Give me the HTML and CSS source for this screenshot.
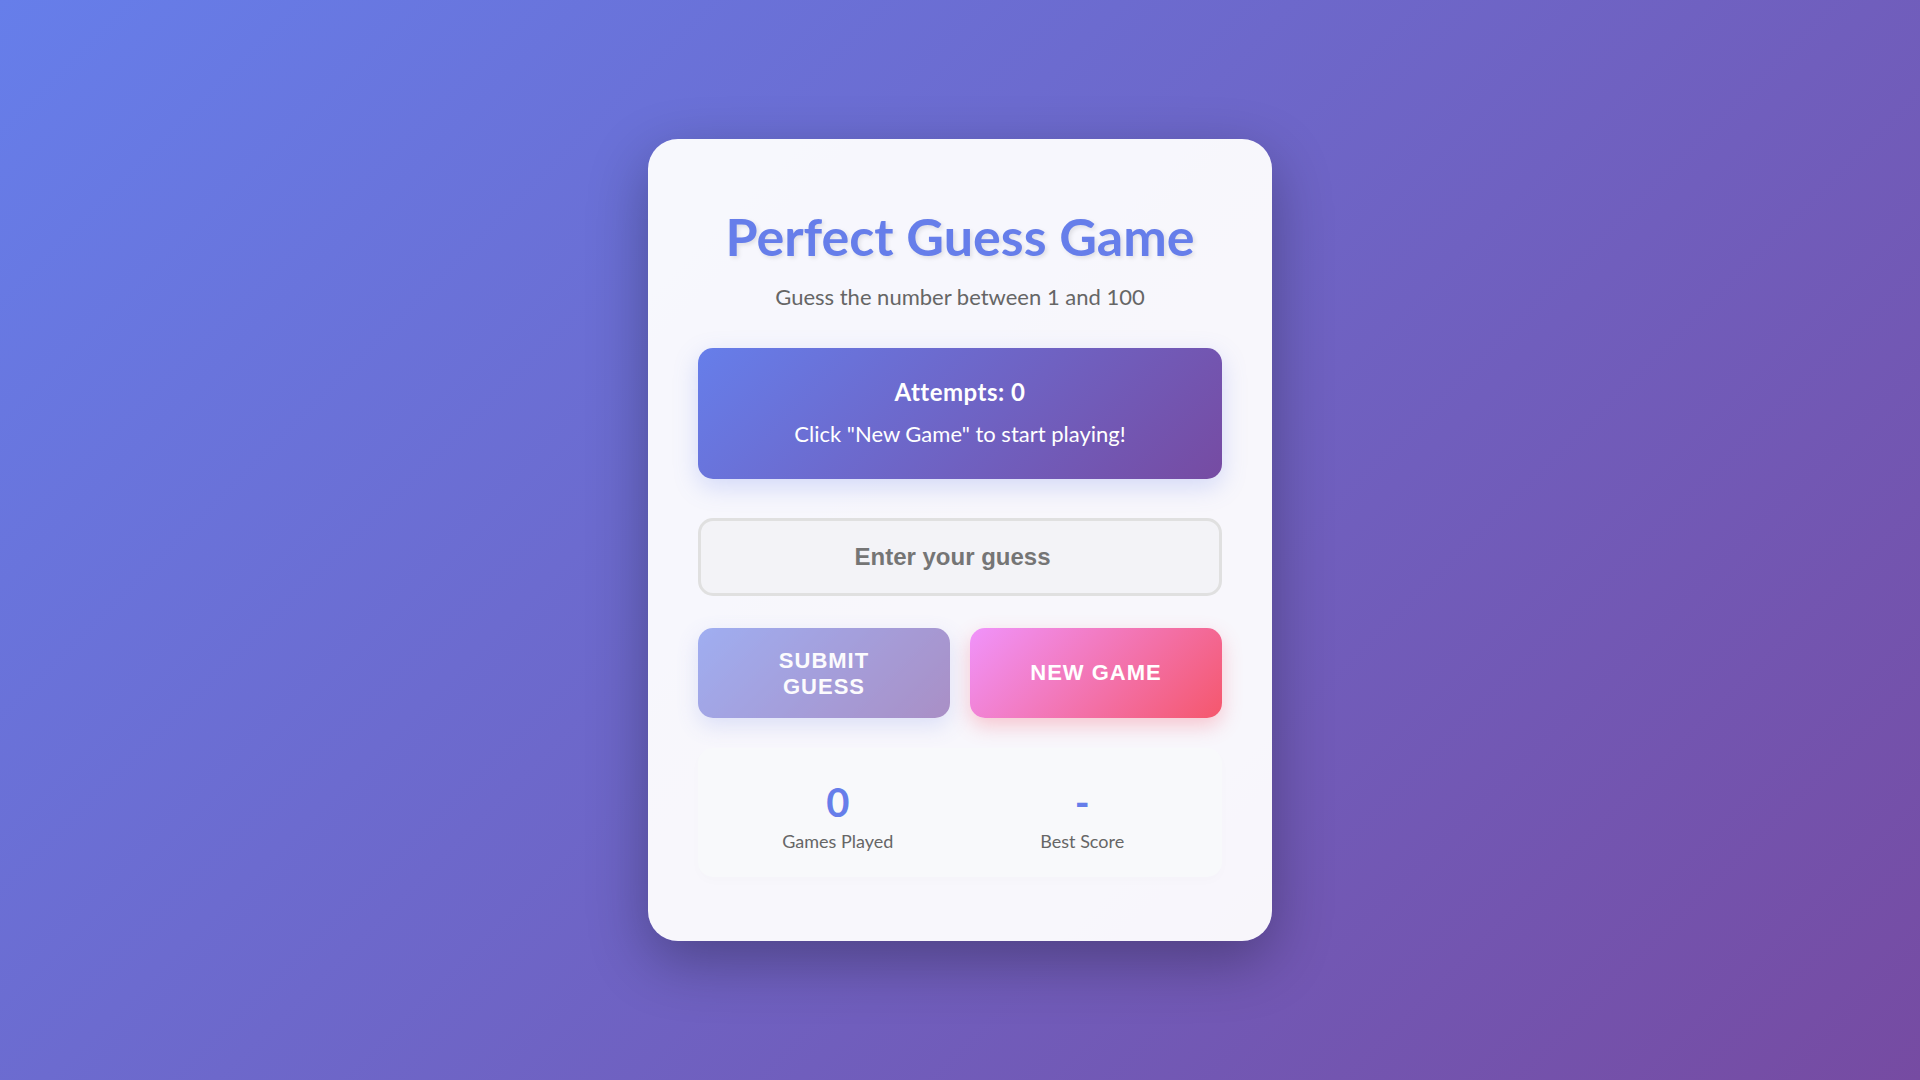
FILE: index.html
```html
<!DOCTYPE html>
<html lang="en">
<head>
<meta charset="UTF-8">
<title>Perfect Guess Game</title>
<link rel="stylesheet" href="styles.css">
</head>
<body>
<main class="card">
  <h1 class="title">Perfect Guess Game</h1>
  <p class="subtitle">Guess the number between 1 and 100</p>
  <section class="status">
    <div class="attempts">Attempts: 0</div>
    <div class="message">Click "New Game" to start playing!</div>
  </section>
  <input class="guess-input" type="number" placeholder="Enter your guess" disabled>
  <div class="buttons">
    <button class="btn btn-submit" disabled>Submit Guess</button>
    <button class="btn btn-new">New Game</button>
  </div>
  <section class="stats">
    <div class="stat">
      <div class="stat-number">0</div>
      <div class="stat-label">Games Played</div>
    </div>
    <div class="stat">
      <div class="stat-number">-</div>
      <div class="stat-label">Best Score</div>
    </div>
  </section>
</main>
</body>
</html>
```

FILE: styles.css
```css
* { box-sizing: border-box; }

html, body {
  margin: 0;
  padding: 0;
  height: 100%;
}

body {
  font-family: "Lato", "Open Sans", sans-serif;
  background: linear-gradient(135deg, #667eea 0%, #764ba2 100%);
  display: flex;
  align-items: center;
  justify-content: center;
  min-height: 100vh;
}

.card {
  width: 624px;
  padding: 50px 50px 64px;
  background: rgba(255, 255, 255, 0.95);
  border-radius: 30px;
  box-shadow: 0 20px 60px rgba(0, 0, 0, 0.3);
  text-align: center;
}

.title {
  margin: 16px 0 0;
  font-size: 52px;
  line-height: 1.2;
  font-weight: 700;
  color: #667eea;
  text-shadow: 2px 2px 4px rgba(0, 0, 0, 0.1);
}

.subtitle {
  margin: 16px 0 0;
  font-size: 22px;
  line-height: 1.2;
  color: #666;
}

.status {
  margin-top: 38px;
  height: 131px;
  padding: 30px 20px;
  border-radius: 15px;
  background: linear-gradient(135deg, #667eea 0%, #764ba2 100%);
  color: #fff;
  box-shadow: 0 8px 25px rgba(102, 126, 234, 0.25);
}

.attempts {
  font-size: 24px;
  font-weight: 700;
  letter-spacing: 0.5px;
  line-height: 27px;
  margin-bottom: 15px;
}

.message {
  font-size: 22px;
  line-height: 27px;
}

.guess-input {
  display: block;
  width: 100%;
  height: 78px;
  margin-top: 39px;
  border: 3px solid #e0e0e0;
  border-radius: 15px;
  background: #f3f3f7;
  font-family: "Liberation Sans", Arial, sans-serif;
  font-size: 24px;
  font-weight: 700;
  text-align: center;
  color: #333;
  padding: 0 15px;
}

.guess-input::placeholder {
  color: #757575;
}

.buttons {
  margin-top: 32px;
  display: grid;
  grid-template-columns: 1fr 1fr;
  gap: 20px;
}

.btn {
  height: 90px;
  padding: 20px 40px;
  border: none;
  border-radius: 15px;
  font-family: "Liberation Sans", Arial, sans-serif;
  font-size: 22px;
  font-weight: 700;
  letter-spacing: 1px;
  text-transform: uppercase;
  color: #fff;
  line-height: 26px;
}

.btn-submit {
  background: linear-gradient(135deg, #667eea 0%, #764ba2 100%);
  opacity: 0.6;
  box-shadow: 0 8px 20px rgba(102, 126, 234, 0.3);
}

.btn-new {
  background: linear-gradient(135deg, #f093fb 0%, #f5576c 100%);
  box-shadow: 0 8px 20px rgba(245, 87, 108, 0.3);
}

.stats {
  margin-top: 30px;
  height: 129px;
  padding: 30px 25px 24px;
  display: grid;
  grid-template-columns: 1fr 1fr;
  gap: 15px;
  background: #f8f9fb;
  border-radius: 15px;
  box-shadow: 0 4px 12px rgba(0, 0, 0, 0.015);
}

.stat-number {
  font-size: 40px;
  font-weight: 700;
  line-height: 48px;
  color: #667eea;
  margin-bottom: 5px;
}

.stat-label {
  font-size: 18px;
  line-height: 21.6px;
  color: #666;
}
```
